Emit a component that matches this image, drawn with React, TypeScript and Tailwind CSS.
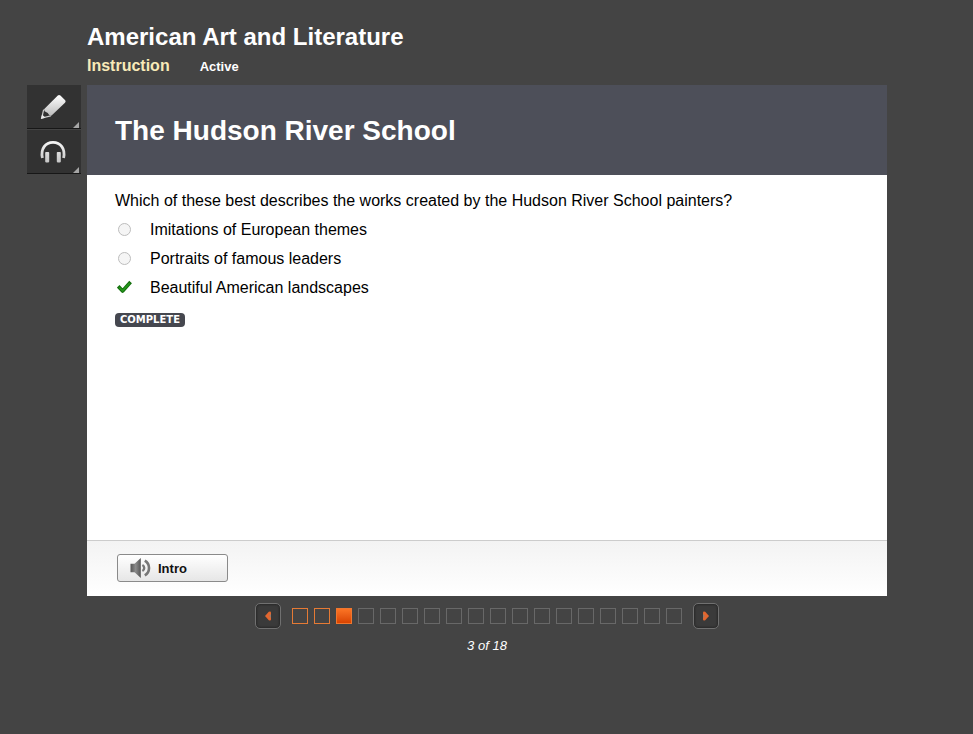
import React, { useState } from 'react';

const slideCount = 18;

const options = [
  { text: 'Imitations of European themes', correct: false },
  { text: 'Portraits of famous leaders', correct: false },
  { text: 'Beautiful American landscapes', correct: true }
];

const PencilIcon: React.FC = () => (
  <svg width="28" height="28" viewBox="0 0 28 28" aria-hidden="true">
    <defs>
      <linearGradient id="pencil" x1="0" y1="0" x2="0" y2="1">
        <stop offset="0" stopColor="#ffffff" />
        <stop offset="1" stopColor="#bdbdbd" />
      </linearGradient>
    </defs>
    <path
      d="M5 16.2 L18.8 2.6 Q20 1.4 21.4 2.6 L26.2 7.2 Q27.2 8.6 26 9.8 L12.6 22.6 Q10.6 23 9.6 21.2 Q9.2 19.6 7.4 19.2 Q5 18.6 5 16.2 Z"
      fill="url(#pencil)"
    />
    <path d="M4.6 16.6 L2.8 25 L11.8 22.8" fill="none" stroke="#cfcfcf" strokeWidth="1.2" />
    <path d="M1.8 26 L3 21.4 L6.6 24.8 Z" fill="#e8e8e8" />
  </svg>
);

const HeadphonesIcon: React.FC = () => (
  <svg width="28" height="28" viewBox="0 0 28 28" aria-hidden="true">
    <defs>
      <linearGradient id="phones" x1="0" y1="0" x2="0" y2="28" gradientUnits="userSpaceOnUse">
        <stop offset="0" stopColor="#ffffff" />
        <stop offset="1" stopColor="#bdbdbd" />
      </linearGradient>
    </defs>
    <path
      d="M3.4 20 C1.4 10.5 6.6 4.4 14 4.4 C21.4 4.4 26.6 10.5 24.6 20"
      fill="none"
      stroke="url(#phones)"
      strokeWidth="2.8"
    />
    <rect x="6.2" y="14" width="4" height="10.4" rx="0.8" fill="url(#phones)" />
    <rect x="17.8" y="14" width="4" height="10.4" rx="0.8" fill="url(#phones)" />
  </svg>
);

const SpeakerIcon: React.FC = () => (
  <svg width="22" height="22" viewBox="0 0 22 22" aria-hidden="true">
    <defs>
      <linearGradient id="speaker" x1="0" y1="0" x2="1" y2="0">
        <stop offset="0" stopColor="#555555" />
        <stop offset="0.5" stopColor="#8c8c8c" />
        <stop offset="1" stopColor="#555555" />
      </linearGradient>
    </defs>
    <path d="M0.5 6.8 H4.5 L10.8 1 V21 L4.5 15.2 H0.5 Z" fill="url(#speaker)" />
    <path d="M12.4 8 A3.4 3.4 0 0 1 12.4 14" fill="none" stroke="#777777" strokeWidth="2.4" />
    <path d="M14.8 3.6 A8.6 8.6 0 0 1 14.8 18.4" fill="none" stroke="#777777" strokeWidth="2.6" />
  </svg>
);

const CheckIcon: React.FC = () => (
  <svg className="col-start-1 row-start-1" width="15" height="15" viewBox="0 0 15 15" aria-hidden="true">
    <path d="M2.4 7.6 L5.6 11 L12.4 3.4" fill="none" stroke="#15700f" strokeWidth="3.6" strokeLinecap="square" strokeLinejoin="round" />
    <path d="M2.6 7.8 L5.6 10.8 L12.2 3.6" fill="none" stroke="#26981c" strokeWidth="1.6" strokeLinecap="round" />
  </svg>
);

const ArrowButton: React.FC<{ label: string; flip?: boolean; onClick: () => void }> = ({ label, flip, onClick }) => (
  <button
    type="button"
    aria-label={label}
    onClick={onClick}
    className="flex h-[26px] w-[26px] items-center justify-center rounded-[5px] border border-[#707070] bg-[#3a3a3a] shadow-[inset_0_0_2px_1px_#292929]"
  >
    <svg className={flip ? 'rotate-180' : ''} width="8" height="12" viewBox="0 0 8 12" aria-hidden="true">
      <path d="M1 6 L4.8 1.8 Q6.8 0.8 7 2.4 V9.6 Q6.8 11.2 4.8 10.2 Z" fill="#e2662f" />
      <path d="M5 6 L7 4 V8 Z" fill="#9c7a68" />
    </svg>
  </button>
);

const App: React.FC = () => {
  const [slide, setSlide] = useState(3);
  const [answer, setAnswer] = useState(2);

  const tools = [
    { label: 'Notes', icon: PencilIcon },
    { label: 'Audio', icon: HeadphonesIcon }
  ];

  return (
    <div className="min-h-screen bg-[#444444] pt-[23px] pr-[86px] pl-[27px] font-['Liberation_Sans',Arial,sans-serif]">
      {/* Lesson header */}
      <header className="pl-[60px]">
        <h1 className="text-2xl leading-7 font-bold text-white">American Art and Literature</h1>
        <div className="flex h-[34px] items-baseline gap-[30px] pt-[3px] font-bold">
          <span className="text-base text-[#f8eab8]">Instruction</span>
          <span className="text-[13px] text-white">Active</span>
        </div>
      </header>

      <div className="flex items-start gap-[6px]">
        {/* Tools */}
        <div className="flex w-[54px] shrink-0 flex-col gap-px">
          {tools.map((tool) => (
            <button
              key={tool.label}
              type="button"
              aria-label={tool.label}
              className="relative flex h-11 w-full items-center justify-center border-b border-[#171717] bg-[#323232] pr-[2px]"
            >
              <tool.icon />
              <svg className="absolute right-[2px] bottom-0" width="6" height="6" viewBox="0 0 6 6" aria-hidden="true">
                <path d="M6 0 V6 H0 Z" fill="#a6a6a6" />
              </svg>
            </button>
          ))}
        </div>

        <div className="min-w-0 flex-1">
          <main className="bg-white text-black">
            <div className="flex h-[90px] items-center bg-[#4d4f59] px-7 pt-[2px]">
              <h2 className="text-[28px] leading-8 font-bold text-white">The Hudson River School</h2>
            </div>

            {/* Question */}
            <div className="min-h-[365px] px-7 pt-[11px]">
              <fieldset>
                <legend className="text-base leading-[29px]">
                  Which of these best describes the works created by the Hudson River School painters?
                </legend>
                {options.map((option, index) => (
                  <label key={option.text} className="flex items-center gap-[18px] pl-[2px] text-base leading-[29px]">
                    <span className="grid place-items-center">
                      <input
                        type="radio"
                        name="answer"
                        checked={answer === index}
                        onChange={() => setAnswer(index)}
                        className="col-start-1 row-start-1 m-px h-[13px] w-[13px] appearance-none rounded-full border border-[#bdbdbd] bg-[#f5f5f5] checked:opacity-0"
                      />
                      {answer === index && option.correct && <CheckIcon />}
                    </span>
                    {option.text}
                  </label>
                ))}
              </fieldset>
              <span className="mt-[11px] inline-block rounded-[4px] bg-[#45474f] px-[5px] font-['DejaVu_Sans',Verdana,sans-serif] text-[10px] leading-[14px] font-bold text-white">
                COMPLETE
              </span>
            </div>

            <div className="border-t border-[#cccccc] bg-linear-to-b from-[#f3f3f3] to-white px-[30px] pt-[13px] pb-[14px]">
              <button
                type="button"
                className="flex h-7 w-[111px] items-center gap-[6px] rounded-[3px] border border-[#8a8a8a] bg-linear-to-b from-white to-[#e6e6e6] pl-3 text-[13px] font-bold text-[#111111]"
              >
                <SpeakerIcon />
                <span className="pt-[2px]">Intro</span>
              </button>
            </div>
          </main>

          {/* Slide navigation */}
          <nav className="mt-[7px] flex items-center justify-center gap-[11px]">
            <ArrowButton label="Previous" onClick={() => setSlide(Math.max(1, slide - 1))} />
            <div className="flex gap-[6px]">
              {Array.from({ length: slideCount }, (_, i) => i + 1).map((n) => (
                <button
                  key={n}
                  type="button"
                  aria-label={`Slide ${n}`}
                  onClick={() => setSlide(n)}
                  className={`h-4 w-4 border ${
                    n === slide
                      ? 'border-[#f0772f] bg-linear-to-b from-[#fb7424] to-[#d94300]'
                      : n < slide
                        ? 'border-[#e57a35]'
                        : 'border-[#686868]'
                  }`}
                />
              ))}
            </div>
            <ArrowButton label="Next" flip onClick={() => setSlide(Math.min(slideCount, slide + 1))} />
          </nav>
          <p className="mt-[7px] text-center text-[13px] leading-5 text-white italic">
            {slide} of {slideCount}
          </p>
        </div>
      </div>
    </div>
  );
};

export default App;
